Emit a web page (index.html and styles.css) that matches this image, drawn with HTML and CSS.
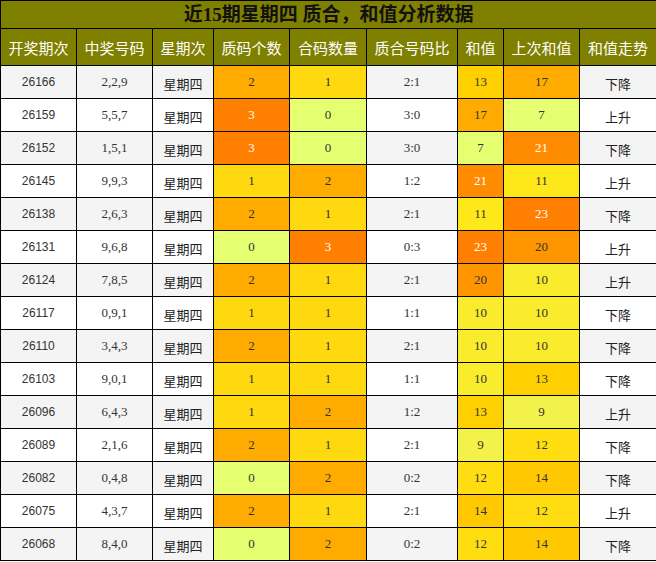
FILE: index.html
```html
<!DOCTYPE html>
<html lang="zh">
<head>
<meta charset="utf-8">
<title>近15期星期四 质合，和值分析数据</title>
<link rel="stylesheet" href="styles.css">
</head>
<body>
<table class="data">
  <colgroup>
    <col class="w76"><col class="w76"><col class="w61"><col class="w76"><col class="w77"><col class="w91"><col class="w46"><col class="w76"><col class="w77">
  </colgroup>
  <thead>
    <tr class="title-row"><th colspan="9">近15期星期四 质合，和值分析数据</th></tr>
    <tr class="head-row">
      <th>开奖期次</th><th>中奖号码</th><th>星期次</th><th>质码个数</th><th>合码数量</th><th>质合号码比</th><th>和值</th><th>上次和值</th><th>和值走势</th>
    </tr>
  </thead>
  <tbody>
    <tr><td class="per">26166</td><td class="num">2,2,9</td><td class="cn">星期四</td><td class="num c2">2</td><td class="num c1">1</td><td class="num">2:1</td><td class="num s13">13</td><td class="num s17">17</td><td class="cn">下降</td></tr>
    <tr><td class="per">26159</td><td class="num">5,5,7</td><td class="cn">星期四</td><td class="num c3">3</td><td class="num c0">0</td><td class="num">3:0</td><td class="num s17">17</td><td class="num s7">7</td><td class="cn">上升</td></tr>
    <tr><td class="per">26152</td><td class="num">1,5,1</td><td class="cn">星期四</td><td class="num c3">3</td><td class="num c0">0</td><td class="num">3:0</td><td class="num s7">7</td><td class="num s21">21</td><td class="cn">下降</td></tr>
    <tr><td class="per">26145</td><td class="num">9,9,3</td><td class="cn">星期四</td><td class="num c1">1</td><td class="num c2">2</td><td class="num">1:2</td><td class="num s21">21</td><td class="num s11">11</td><td class="cn">上升</td></tr>
    <tr><td class="per">26138</td><td class="num">2,6,3</td><td class="cn">星期四</td><td class="num c2">2</td><td class="num c1">1</td><td class="num">2:1</td><td class="num s11">11</td><td class="num s23">23</td><td class="cn">下降</td></tr>
    <tr><td class="per">26131</td><td class="num">9,6,8</td><td class="cn">星期四</td><td class="num c0">0</td><td class="num c3">3</td><td class="num">0:3</td><td class="num s23">23</td><td class="num s20">20</td><td class="cn">上升</td></tr>
    <tr><td class="per">26124</td><td class="num">7,8,5</td><td class="cn">星期四</td><td class="num c2">2</td><td class="num c1">1</td><td class="num">2:1</td><td class="num s20">20</td><td class="num s10">10</td><td class="cn">上升</td></tr>
    <tr><td class="per">26117</td><td class="num">0,9,1</td><td class="cn">星期四</td><td class="num c1">1</td><td class="num c1">1</td><td class="num">1:1</td><td class="num s10">10</td><td class="num s10">10</td><td class="cn">下降</td></tr>
    <tr><td class="per">26110</td><td class="num">3,4,3</td><td class="cn">星期四</td><td class="num c2">2</td><td class="num c1">1</td><td class="num">2:1</td><td class="num s10">10</td><td class="num s10">10</td><td class="cn">下降</td></tr>
    <tr><td class="per">26103</td><td class="num">9,0,1</td><td class="cn">星期四</td><td class="num c1">1</td><td class="num c1">1</td><td class="num">1:1</td><td class="num s10">10</td><td class="num s13">13</td><td class="cn">下降</td></tr>
    <tr><td class="per">26096</td><td class="num">6,4,3</td><td class="cn">星期四</td><td class="num c1">1</td><td class="num c2">2</td><td class="num">1:2</td><td class="num s13">13</td><td class="num s9">9</td><td class="cn">上升</td></tr>
    <tr><td class="per">26089</td><td class="num">2,1,6</td><td class="cn">星期四</td><td class="num c2">2</td><td class="num c1">1</td><td class="num">2:1</td><td class="num s9">9</td><td class="num s12">12</td><td class="cn">下降</td></tr>
    <tr><td class="per">26082</td><td class="num">0,4,8</td><td class="cn">星期四</td><td class="num c0">0</td><td class="num c2">2</td><td class="num">0:2</td><td class="num s12">12</td><td class="num s14">14</td><td class="cn">下降</td></tr>
    <tr><td class="per">26075</td><td class="num">4,3,7</td><td class="cn">星期四</td><td class="num c2">2</td><td class="num c1">1</td><td class="num">2:1</td><td class="num s14">14</td><td class="num s12">12</td><td class="cn">上升</td></tr>
    <tr><td class="per">26068</td><td class="num">8,4,0</td><td class="cn">星期四</td><td class="num c0">0</td><td class="num c2">2</td><td class="num">0:2</td><td class="num s12">12</td><td class="num s14">14</td><td class="cn">下降</td></tr>
  </tbody>
</table>
</body>
</html>
```

FILE: styles.css
```css
html, body {
  margin: 0;
  padding: 0;
  background: #ffffff;
}

.data {
  border-collapse: collapse;
  table-layout: fixed;
  width: 656px;
  font-family: "Liberation Serif", "Noto Sans CJK SC", serif;
  color: #333333;
}

.w76 { width: 76px; }
.w77 { width: 77px; }
.w61 { width: 61px; }
.w91 { width: 91px; }
.w46 { width: 46px; }

.data th,
.data td {
  border: 1px solid #000000;
  padding: 0;
  text-align: center;
  vertical-align: middle;
}

.title-row th {
  height: 27px;
  background: #808000;
  color: #111111;
  font-size: 19px;
  font-weight: bold;
  font-family: "Liberation Serif", "Noto Sans CJK SC", serif;
  line-height: 27px;
}

.head-row th {
  height: 36px;
  background: #808000;
  color: #ffffff;
  font-size: 15px;
  font-weight: normal;
  font-family: "Noto Sans CJK SC", sans-serif;
}

.data tbody td {
  height: 32px;
  line-height: 16px;
}

.data tbody tr:nth-child(odd) { background: #f4f4f4; }
.data tbody tr:nth-child(even) { background: #ffffff; }

.per {
  font-family: "Liberation Sans", "DejaVu Sans", sans-serif;
  font-size: 12px;
}

.num {
  font-size: 13px;
}

.data tbody td.cn {
  font-family: "Noto Sans CJK SC", sans-serif;
  font-size: 13px;
  color: #222222;
  height: 29px;
  padding-top: 3px;
}

.c0 { background: #e5ff70; }
.c1 { background: #ffd910; }
.c2 { background: #ffab00; }
.c3 { background: #ff8000; color: #ffffff; }

.s7  { background: #e5ff70; }
.s9  { background: #f2f24a; }
.s10 { background: #f8ec2c; }
.s11 { background: #ffe81a; }
.s12 { background: #ffdd10; }
.s13 { background: #ffd000; }
.s14 { background: #ffc800; }
.s17 { background: #ffab00; }
.s20 { background: #ff9600; }
.s21 { background: #ff8c00; color: #ffffff; }
.s23 { background: #ff8000; color: #ffffff; }
```
